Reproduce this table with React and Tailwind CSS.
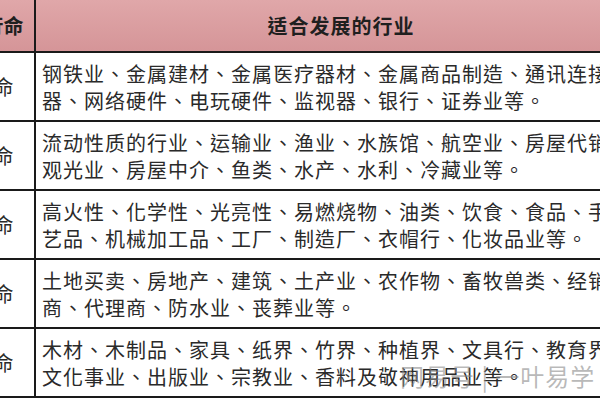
import React from 'react';

const rows = [
  {
    label: '金命',
    lines: ['钢铁业、金属建材、金属医疗器材、金属商品制造、通讯连接', '器、网络硬件、电玩硬件、监视器、银行、证券业等。'],
  },
  {
    label: '水命',
    lines: ['流动性质的行业、运输业、渔业、水族馆、航空业、房屋代销', '观光业、房屋中介、鱼类、水产、水利、冷藏业等。'],
  },
  {
    label: '火命',
    lines: ['高火性、化学性、光亮性、易燃烧物、油类、饮食、食品、手工', '艺品、机械加工品、工厂、制造厂、衣帽行、化妆品业等。'],
  },
  {
    label: '土命',
    lines: ['土地买卖、房地产、建筑、土产业、农作物、畜牧兽类、经销', '商、代理商、防水业、丧葬业等。'],
  },
  {
    label: '木命',
    lines: ['木材、木制品、家具、纸界、竹界、种植界、文具行、教育界、', '文化事业、出版业、宗教业、香料及敬神用品业等。'],
  },
];

const font = { fontFamily: '"Noto Sans CJK TC", "Noto Sans CJK SC", sans-serif' };

const App = () => {
  return (
    <div lang="zh-TW" className="relative w-[600px] h-[400px] overflow-hidden bg-white text-[#2a2a2a]" style={font}>
      <div className="ml-[-47px] w-[700px] flex flex-col">
        <div className="flex h-[53px] bg-gradient-to-b from-[#e0a7a9] to-[#d59598] border-b-2 border-[#1a1a1a] font-bold text-[20px] text-[#1f1f1f]">
          <div className="w-[83px] shrink-0 border-r-2 border-[#1a1a1a] flex items-center justify-center">五行命</div>
          <div className="w-[610px] flex items-center justify-center tracking-[1px]">适合发展的行业</div>
        </div>
        {rows.map((r) => (
          <div key={r.label} className="flex h-[69px] border-b-2 border-[#1a1a1a]">
            <div className="w-[83px] shrink-0 border-r-2 border-[#1a1a1a] flex items-center justify-center text-[20px]">
              {r.label}
            </div>
            <div className="flex-1 flex flex-col justify-center pl-[6px] text-[20px] leading-[27px] tracking-[1px]">
              {r.lines.map((l, i) => (
                <div key={i} className="whitespace-nowrap">{l}</div>
              ))}
            </div>
          </div>
        ))}
      </div>
      <div className="absolute left-[400px] top-[358px] text-[24px] text-[#8a8a8a]/60 whitespace-nowrap tracking-[1px]">
        网易号 | 一叶易学
      </div>
    </div>
  );
};

export default App;
